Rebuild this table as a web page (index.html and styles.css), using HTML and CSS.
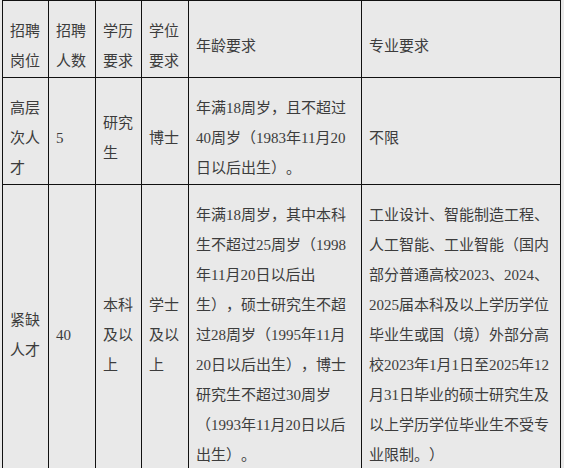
FILE: index.html
```html
<!DOCTYPE html>
<html lang="zh-CN">
<head>
<meta charset="utf-8">
<title>招聘</title>
<link rel="stylesheet" href="styles.css">
</head>
<body>
<table class="recruit">
  <colgroup>
    <col class="c-post">
    <col class="c-num">
    <col class="c-edu">
    <col class="c-deg">
    <col class="c-age">
    <col class="c-major">
  </colgroup>
  <tr>
    <td>招聘岗位</td>
    <td>招聘人数</td>
    <td>学历要求</td>
    <td>学位要求</td>
    <td>年龄要求</td>
    <td>专业要求</td>
  </tr>
  <tr>
    <td>高层次人才</td>
    <td>5</td>
    <td>研究生</td>
    <td>博士</td>
    <td>年满18周岁，且不超过40周岁（1983年11月20日以后出生）。</td>
    <td>不限</td>
  </tr>
  <tr>
    <td>紧缺人才</td>
    <td>40</td>
    <td>本科及以上</td>
    <td>学士及以上</td>
    <td>年满18周岁，其中本科生不超过25周岁（1998年11月20日以后出生），硕士研究生不超过28周岁（1995年11月20日以后出生），博士研究生不超过30周岁（1993年11月20日以后出生）。</td>
    <td>工业设计、智能制造工程、人工智能、工业智能（国内部分普通高校2023、2024、2025届本科及以上学历学位毕业生或国（境）外部分高校2023年1月1日至2025年12月31日毕业的硕士研究生及以上学历学位毕业生不受专业限制。）</td>
  </tr>
</table>
</body>
</html>
```

FILE: styles.css
```css
html, body {
  margin: 0;
  padding: 0;
  background: #e9e9e9;
}

body {
  padding: 0 0 0 2px;
  font-family: "Liberation Serif", "Noto Sans CJK SC", serif;
  font-size: 15px;
  color: #3c3c3c;
  text-spacing-trim: space-all;
  text-autospace: no-autospace;
}

.recruit {
  border-collapse: collapse;
  table-layout: fixed;
  width: 559px;
  background: #e9e9e9;
}

.c-post { width: 46px; }
.c-num { width: 47px; }
.c-edu { width: 46px; }
.c-deg { width: 47px; }
.c-age { width: 173px; }
.c-major { width: 199px; }

.recruit td {
  border: 1px solid #111;
  padding: 15px 7px 1px 7px;
  line-height: 30px;
  vertical-align: middle;
  text-align: left;
  word-break: normal;
}
```
